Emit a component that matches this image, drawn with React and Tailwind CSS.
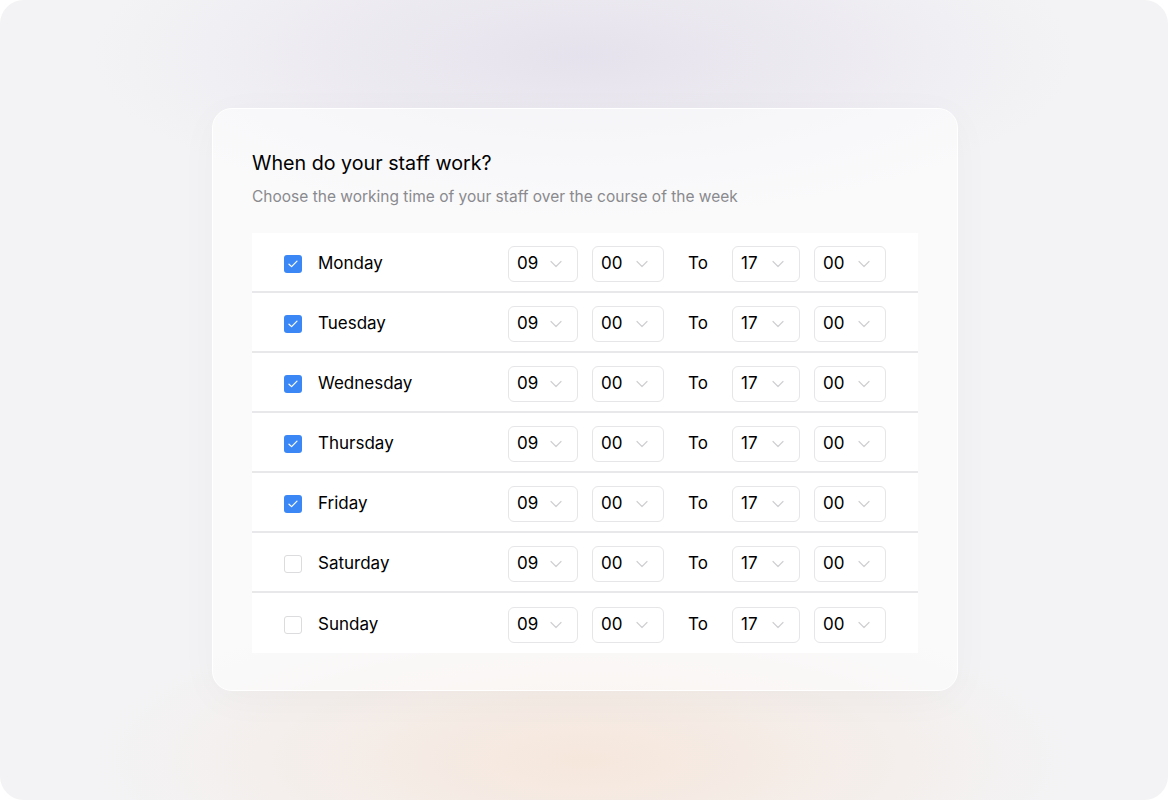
const days = [
  { name: "Monday", on: true },
  { name: "Tuesday", on: true },
  { name: "Wednesday", on: true },
  { name: "Thursday", on: true },
  { name: "Friday", on: true },
  { name: "Saturday", on: false },
  { name: "Sunday", on: false },
];

function Chevron() {
  return (
    <svg width="12" height="8" viewBox="0 0 12 8" fill="none" className="text-[#d0d0d3]">
      <path d="M1 1.5l5 5 5-5" stroke="currentColor" strokeWidth="1.2" strokeLinecap="round" strokeLinejoin="round" />
    </svg>
  );
}

function TimeSelect({ value, width }) {
  return (
    <div
      className={`flex h-9 items-center justify-between rounded-md border border-[#e6e6e8] bg-white pl-[8px] pr-[15px] text-[17px] text-black ${width}`}
    >
      <span>{value}</span>
      <Chevron />
    </div>
  );
}

function Checkbox({ on }) {
  if (on) {
    return (
      <div className="flex h-[18px] w-[18px] items-center justify-center rounded-[3px] bg-[#3b87f6]">
        <svg width="10" height="8" viewBox="0 0 10 8" fill="none">
          <path d="M1 4.2l2.6 2.4L9 1.2" stroke="white" strokeWidth="1.2" strokeLinecap="round" strokeLinejoin="round" />
        </svg>
      </div>
    );
  }
  return <div className="h-[18px] w-[18px] rounded-[3px] border border-[#dcdcde] bg-white" />;
}

export default function App() {
  return (
    <div className="bg-white font-['Inter',sans-serif]">
      <div className="flex h-[800px] w-full items-start justify-center rounded-[24px] bg-[#f3f3f5] bg-[radial-gradient(ellipse_42%_20%_at_50%_7%,#e6e2ed_0%,transparent_100%),radial-gradient(ellipse_42%_20%_at_50%_95%,#f6e7dc_0%,transparent_100%)] pt-[108px]">
        <div className="ml-[2px] w-[746px] rounded-[20px] border border-white bg-white/55 px-[39px] pb-[37px] pt-10 shadow-[0_8px_40px_rgba(0,0,0,0.03)]">
          <h1 className="text-[19.7px] leading-7 text-black">When do your staff work?</h1>
          <p className="mt-[10px] text-[15.5px] leading-5 text-[#8a8a8e]">
            Choose the working time of your staff over the course of the week
          </p>
          <div className="mt-[26px] divide-y-2 divide-[#e8e8ea] bg-white">
            {days.map((d) => (
              <div key={d.name} className="flex h-[60px] items-center pt-1">
                <div className="flex w-[256px] items-center gap-4 pl-8">
                  <Checkbox on={d.on} />
                  <span className="text-[17px] text-black">{d.name}</span>
                </div>
                <TimeSelect value="09" width="w-[70px]" />
                <div className="ml-[14px]">
                  <TimeSelect value="00" width="w-[72px]" />
                </div>
                <span className="ml-6 w-5 text-[17px] text-black">To</span>
                <div className="ml-6">
                  <TimeSelect value="17" width="w-[68px]" />
                </div>
                <div className="ml-[14px]">
                  <TimeSelect value="00" width="w-[72px]" />
                </div>
              </div>
            ))}
          </div>
        </div>
      </div>
    </div>
  );
}
